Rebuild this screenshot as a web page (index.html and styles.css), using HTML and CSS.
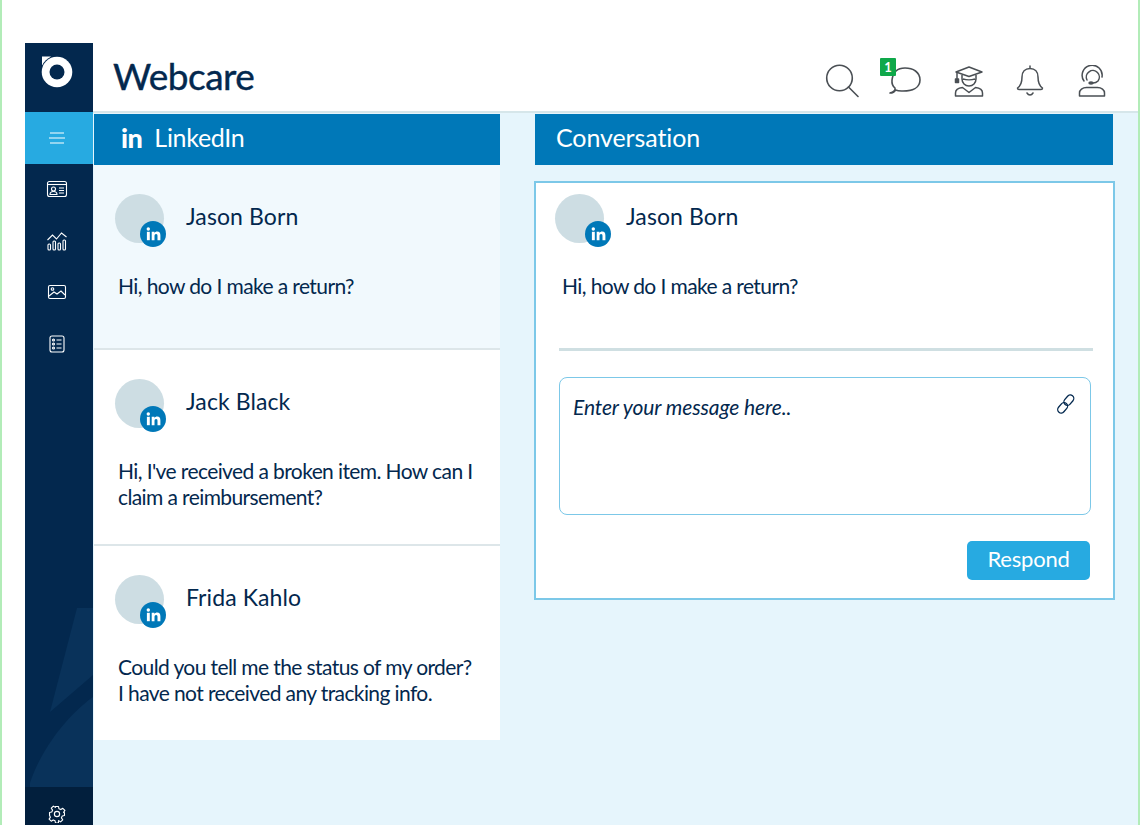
FILE: index.html
```html
<!DOCTYPE html>
<html lang="en">
<head>
<meta charset="utf-8">
<title>Webcare</title>
<link rel="stylesheet" href="styles.css">
</head>
<body>
<svg class="defs" width="0" height="0" aria-hidden="true">
  <symbol id="in-badge" viewBox="0 0 26 26">
    <circle cx="13" cy="13" r="13" fill="#0078b8"/>
    <circle cx="8.3" cy="8" r="1.7" fill="#fff"/>
    <rect x="6.9" y="10.8" width="2.9" height="8.4" fill="#fff"/>
    <path d="M11.7 10.8h2.7v1.3c.6-1 1.6-1.5 2.8-1.5 2.3 0 3.2 1.500 3.200 3.800v4.800h-2.900v-4.300c0-1.200-.4-1.900-1.400-1.900-1.100 0-1.600.8-1.600 1.900v4.300h-2.800z" fill="#fff"/>
  </symbol>
</svg>
<div class="app">
  <nav class="sidebar">
    <div class="logo">
      <svg width="34" height="34" viewBox="0 0 34 34"><path d="M2 1.500H11L2 11z" fill="#fff"/><circle cx="17" cy="17" r="16.200" fill="#03284e"/><circle cx="17" cy="17" r="15.300" fill="#fff"/><circle cx="17" cy="17" r="7.500" fill="#03284e"/></svg>
    </div>
    <div class="nav-item active">
      <svg width="18" height="14" viewBox="0 0 18 14" fill="none" stroke="#fff" stroke-width="1.200"><path d="M2 2h14M1 7h16M2 12h14"/></svg>
    </div>
    <div class="nav-item">
      <svg width="22" height="18" viewBox="0 0 22 18" fill="none" stroke="#fff" stroke-width="1.100"><rect x="1.500" y="1.500" width="19" height="15" rx="2"/><path d="M1.500 4.500h19"/><circle cx="7.500" cy="9" r="2"/><path d="M4 14.500c0-2 1.500-3 3.500-3s3.500 1 3.500 3zM13 8h5M13 10.500h5M13 13h5"/></svg>
    </div>
    <div class="nav-item">
      <svg width="22" height="20" viewBox="0 0 22 20" fill="none" stroke="#fff" stroke-width="1.100"><path d="M1.500 9l5-5 4 4 5-6 5 4"/><rect x="2" y="13" width="2.500" height="6" rx="1"/><rect x="7" y="10" width="2.500" height="9" rx="1"/><rect x="12" y="12" width="2.500" height="7" rx="1"/><rect x="17" y="9" width="2.500" height="10" rx="1"/></svg>
    </div>
    <div class="nav-item">
      <svg width="20" height="16" viewBox="0 0 20 16" fill="none" stroke="#fff" stroke-width="1.100"><rect x="1.500" y="1.500" width="17" height="13" rx="1.500"/><circle cx="5.500" cy="5" r="1.300"/><path d="M2 12l5-4 3 2 4-3 4 4"/></svg>
    </div>
    <div class="nav-item">
      <svg width="16" height="18" viewBox="0 0 16 18" fill="none" stroke="#fff" stroke-width="1.100"><rect x="1" y="1" width="14" height="16" rx="2"/><circle cx="4.500" cy="5" r="1"/><circle cx="4.500" cy="9" r="1"/><circle cx="4.500" cy="13" r="1"/><path d="M7.500 5h5M7.500 9h5M7.500 13h5"/></svg>
    </div>
    <svg class="side-art" width="68" height="200" viewBox="0 0 68 200"><path d="M52 21H68V88L25 125z" fill="#09325a"/><path d="M68 110C40 130 15 165 5 196V200H68z" fill="#09325a"/></svg>
    <div class="settings">
      <svg width="18" height="18" viewBox="0 0 24 24" fill="none" stroke="#fff" stroke-width="1.500" stroke-linejoin="round"><circle cx="12" cy="12" r="3.500"/><path d="M10 2h4l.6 3 2.500 1.100 2.600-1.700 2.800 2.800-1.700 2.600L21.900 10l.1 4-3 .6-1.100 2.500 1.700 2.600-2.800 2.800-2.600-1.700-.2.200-.1 3H10l-.6-3-2.500-1.100-2.600 1.700-2.800-2.800 1.700-2.600L2.100 14 2 10l3-.6 1.100-2.500-1.700-2.600 2.800-2.800 2.600 1.700L10 2.500z"/></svg>
    </div>
  </nav>
  <div class="content">
    <header class="topbar">
      <h1 class="title">Webcare</h1>
      <div class="tools">
        <svg width="34" height="34" viewBox="0 0 34 34" fill="none" stroke="#4a4f54" stroke-width="1.600"><circle cx="14.500" cy="14" r="12.800"/><path d="M23.500 23l9.500 9.500" stroke-linecap="round"/></svg>
        <div class="chat">
          <svg width="34" height="28" viewBox="0 0 34 28" fill="none" stroke="#4a4f54" stroke-width="1.600" stroke-linejoin="round"><path d="M2 26c3 0 4.500-1.200 5.500-3 2 .8 4.500 1.200 7.500 1 9 0 17-3 17-11S25 1 17 1 5 5 4 13c-.3 3 .5 6 3 8 .5 2-2 4-5 5z"/></svg>
          <span class="badge">1</span>
        </div>
        <svg class="grad" width="30" height="32" viewBox="0 0 30 32" fill="none" stroke="#4a4f54" stroke-width="1.500" stroke-linejoin="round"><path d="M2 7l13-5 13 5-13 4.500z"/><path d="M3 7v7"/><rect x="1.500" y="14" width="3" height="3.500" fill="#4a4f54"/><path d="M8 10v4c0 4 3 7 7 7s7-3 7-7v-4M9 14c3 1 9 1 12 0"/><path d="M1.500 31v-3c0-3 3-5 7-5.500l6.500 5 6.500-5c4 .5 7 2.500 7 5.500v3z"/></svg>
        <svg width="28" height="32" viewBox="0 0 28 32" fill="none" stroke="#4a4f54" stroke-width="1.500" stroke-linejoin="round" stroke-linecap="round"><path d="M14 1v2.500M14 3.500c-5 0-8 3.500-8 8.500 0 6-1.500 9-4.500 11 0 1 .5 1.500 1.500 1.500h22c1 0 1.500-.5 1.500-1.500-3-2-4.500-5-4.500-11 0-5-3-8.500-8-8.500zM11 28c1.500 2.500 4.500 2.500 6 0"/></svg>
        <svg width="28" height="32" viewBox="0 0 28 32" fill="none" stroke="#4a4f54" stroke-width="1.500" stroke-linecap="round"><path d="M6 16A10 10 0 1 1 24 12"/><path d="M9 15a6.500 6.500 0 1 1 11 1c-1 1-2.500 2-5 2"/><ellipse cx="13" cy="18" rx="2" ry="1" fill="#4a4f54"/><path d="M1.500 31v-3c0-3 3-5.500 7-5.500h11c4 0 7 2.500 7 5.500v3z" stroke-linejoin="round"/></svg>
      </div>
    </header>
    <main class="main">
      <section class="list-col">
        <h2 class="bar bar-list"><span class="in-mark">in</span><span class="bar-label">LinkedIn</span></h2>
        <article class="item item-selected">
          <div class="person"><div class="avatar"><svg class="in-icon"><use href="#in-badge"/></svg></div><span class="name">Jason Born</span></div>
          <p class="msg">Hi, how do I make a return?</p>
        </article>
        <article class="item item-two">
          <div class="person"><div class="avatar"><svg class="in-icon"><use href="#in-badge"/></svg></div><span class="name">Jack Black</span></div>
          <p class="msg">Hi, I've received a broken item. How can I<br>claim a reimbursement?</p>
        </article>
        <article class="item item-three">
          <div class="person"><div class="avatar"><svg class="in-icon"><use href="#in-badge"/></svg></div><span class="name">Frida Kahlo</span></div>
          <p class="msg">Could you tell me the status of my order?<br>I have not received any tracking info.</p>
        </article>
      </section>
      <section class="conv-col">
        <h2 class="bar">Conversation</h2>
        <div class="panel">
          <div class="panel-top">
            <div class="person"><div class="avatar"><svg class="in-icon"><use href="#in-badge"/></svg></div><span class="name">Jason Born</span></div>
            <p class="msg">Hi, how do I make a return?</p>
          </div>
          <div class="composer">
            <em class="placeholder">Enter your message here..</em>
            <svg width="22" height="22" viewBox="0 0 22 22" fill="none" stroke="#03284e" stroke-width="1.300"><rect x="10.500" y="1.500" width="7" height="11.500" rx="3.500" transform="rotate(40 14 7)"/><rect x="4" y="9" width="7" height="11.500" rx="3.500" transform="rotate(40 7.500 15)"/></svg>
          </div>
          <div class="actions"><button class="respond" type="button">Respond</button></div>
        </div>
      </section>
    </main>
  </div>
</div>
</body>
</html>
```
FILE: styles.css
```css
* { box-sizing: border-box; }
html, body { margin: 0; height: 825px; overflow: hidden; }
body {
  background: #fff;
  border-left: 2px solid #b2ecb8;
  border-right: 2px solid #b2ecb8;
  padding: 43px 0 0 23px;
  font-family: Lato, "Liberation Sans", sans-serif;
  color: #03284e;
}
.defs { position: absolute; }
.app { display: flex; height: 782px; }
.sidebar {
  position: relative;
  width: 68px;
  flex: none;
  background: #03284e;
  display: flex;
  flex-direction: column;
}
.logo { height: 69px; padding: 12px 0 0 15px; }
.logo svg { display: block; }
.nav-item { height: 51.500px; display: flex; align-items: center; justify-content: center; flex: none; padding-right: 4px; }
.nav-item.active { background: #27aae1; }
.side-art { position: absolute; left: 0; bottom: 38px; }
.settings {
  position: absolute;
  left: 0; right: 0; bottom: 0;
  height: 38px;
  background: #021f3d;
  display: flex;
  align-items: center;
  justify-content: center;
  padding: 16px 4px 0 0;
}
.content { flex: 1; display: flex; flex-direction: column; min-width: 0; }
.topbar {
  height: 70px;
  flex: none;
  padding: 0 32px 0 20px;
  display: flex;
  align-items: center;
  justify-content: space-between;
  background: #fff;
  border-bottom: 2px solid #d6e6ea;
}
.title { margin: 0; font-size: 37px; font-weight: 400; letter-spacing: -0.5px; line-height: 1; padding-bottom: 3px; -webkit-text-stroke: 0.4px #03284e; }
.tools { display: flex; align-items: center; gap: 34px; padding-top: 8px; }
.chat { position: relative; margin: 0 -2px 0 -5px; }
.chat svg { display: block; }
.grad { margin-right: -2px; }
.badge {
  position: absolute;
  left: -8px; top: -9px;
  width: 16px; height: 18px;
  border-radius: 1px;
  background: #0fa84a;
  color: #fff;
  font-size: 13px;
  font-weight: 700;
  text-align: center;
  line-height: 18px;
}
.main {
  flex: 1;
  display: flex;
  gap: 35px;
  background: #e6f5fc;
  padding: 1px 25px 0 1px;
  min-height: 0;
}
.list-col { width: 406px; flex: none; }
.conv-col { flex: 1; min-width: 0; display: flex; flex-direction: column; }
.bar {
  margin: 0;
  height: 51px;
  background: #0078b8;
  color: #fff;
  font-size: 25px;
  font-weight: 400;
  letter-spacing: -0.1px;
  line-height: 47px;
  padding-left: 21px;
  flex: none;
}
.bar-list { padding-left: 27px; display: flex; align-items: flex-start; }
.in-mark { font-weight: 900; font-size: 27px; margin-right: 12px; letter-spacing: -0.5px; }
.bar-label { letter-spacing: -0.3px; }
.item { background: #fff; border-bottom: 2px solid #dde6e9; padding: 29px 22px 0 21px; }
.item-selected { background: #f1f9fd; height: 185px; }
.item-two { height: 196px; }
.item-three { height: 194px; border-bottom: 0; }
.person { display: flex; align-items: flex-start; }
.avatar {
  position: relative;
  width: 49px; height: 49px;
  border-radius: 50%;
  background: #cddde3;
  flex: none;
  margin-right: 22px;
}
.in-icon { position: absolute; left: 25px; top: 27px; width: 26px; height: 26px; }
.name { font-size: 23px; letter-spacing: 0.1px; line-height: 28px; margin-top: 8px; }
.msg { margin: 30px 0 0 3px; font-size: 21px; line-height: 26px; letter-spacing: -0.6px; font-weight: 400; }
.panel {
  margin-top: 16px;
  width: 581px;
  height: 419px;
  margin-left: -1px;
  background: #fff;
  border: 2px solid #7cc8e8;
  padding: 0 20px 0 23px;
}
.panel-top { height: 168px; padding-top: 11px; border-bottom: 3px solid #cfdfe2; }
.panel-top .avatar { margin-left: -4px; margin-right: 22px; }
.panel-top .in-icon { left: 30px; }
.composer {
  margin: 26px 0 0 0;
  width: 532px;
  height: 138px;
  border: 1px solid #7cc8e8;
  border-radius: 8px;
  display: flex;
  justify-content: space-between;
  align-items: flex-start;
  padding: 15px 13px 0 13px;
}
.placeholder { font-size: 21px; letter-spacing: -0.1px; line-height: 28px; }
.actions { display: flex; justify-content: flex-end; margin-top: 26px; padding-right: 3px; }
.respond {
  width: 123px; height: 39px;
  border: 0;
  border-radius: 5px;
  background: #27aae1;
  color: #fff;
  font: 400 22px/35px Lato, "Liberation Sans", sans-serif;
  letter-spacing: -0.2px;
  padding: 0 0 4px;
}
```
